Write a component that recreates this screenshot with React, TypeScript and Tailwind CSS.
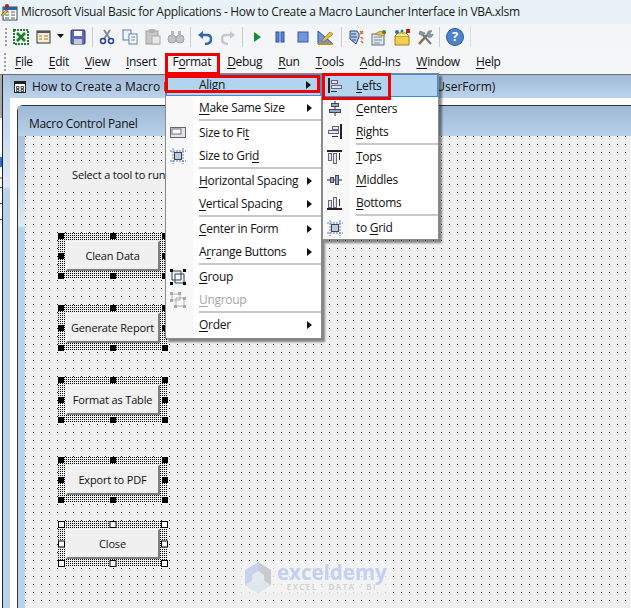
import React from 'react';

const uiFont = { fontFamily: '"Open Sans", "Noto Sans", sans-serif' };

// little helper for the underlined access keys
const Item = ({ pre = '', u, post = '' }: { pre?: string; u: string; post?: string }) => (
  <span>{pre}<u className="underline-offset-2">{u}</u>{post}</span>
);

const Arrow = () => (
  <svg width="5" height="8" viewBox="0 0 5 8" className="absolute top-1/2 right-[9px] -translate-y-1/2"><path d="M0 0l5 4-5 4z" fill="#111" /></svg>
);

const Sep = () => <div className="ml-[33px] h-[2px] bg-[#c8c8c8]" />;

const ToolSep = () => <div className="mx-[1px] h-[20px] w-[1px] bg-[#c4cdd4]" />;

const Grip = () => (
  <div className="mr-[3px] flex h-[18px] w-[3px] flex-col justify-between">
    {[0, 1, 2, 3, 4].map((i) => <div key={i} className="h-[2px] w-[2px] bg-[#a0a0a0]" />)}
  </div>
);

const Ico = ({ children, w = 20 }: { children: React.ReactNode; w?: number }) => (
  <svg width={w} height="18" viewBox={`0 0 ${w} 18`} className="shrink-0">{children}</svg>
);

const AppIcon = () => (
  <svg width="18" height="18" viewBox="0 0 18 18" className="shrink-0">
    <rect x="3" y="4" width="14" height="13" fill="#fff" stroke="#445" />
    <rect x="3" y="4" width="14" height="3" fill="#2b5fa8" />
    <path d="M5 9h4M11 9h4M5 12h4M11 12h4M5 15h4M11 15h4" stroke="#555" />
    <path d="M1 12l5-5 2 1-5 5z" fill="#e8c020" stroke="#333" strokeWidth=".5" />
    <circle cx="7" cy="3" r="2" fill="#b02020" />
  </svg>
);

const MiniForm = () => (
  <svg width="12" height="12" viewBox="0 0 12 12" className="shrink-0">
    <rect x=".5" y=".5" width="11" height="11" fill="#fff" stroke="#222" />
    <rect x="1" y="1" width="10" height="2" fill="#222" />
    <path d="M2.500 5.500h2.500v2H2.500zM7 5.500h2.500v2H7zM2.500 8.500h2.500v2H2.500zM7 8.500h2.500v2H7z" fill="none" stroke="#222" strokeWidth=".8" />
  </svg>
);

const MenuRow = ({ active, hasArrow, icon, disabled, short, iconCol = 'w-[23px] mr-[10px]', children }: { active?: boolean; hasArrow?: boolean; icon?: React.ReactNode; disabled?: boolean; short?: boolean; iconCol?: string; children: React.ReactNode }) => (
  <div className={`relative flex items-center text-[12px] ${short ? 'h-[22px]' : 'h-[23px]'} ${active ? 'border border-[#3a90d8] bg-[#b3d4ee]' : ''} ${disabled ? 'text-[#a6a6a6]' : 'text-[#111]'}`}>
    <div className={`flex shrink-0 items-center justify-center ${iconCol} ${active ? '-ml-[1px]' : ''}`}>{icon}</div>
    {children}
    {hasArrow && <Arrow />}
  </div>
);

const IconLefts = () => (
  <svg width="14" height="15" viewBox="0 0 14 15"><path d="M1 0v15" stroke="#222" strokeWidth="2" /><rect x="3.5" y="2.5" width="6" height="3" fill="#dfe8f2" stroke="#667" /><rect x="3.5" y="7.5" width="10" height="3" fill="#dfe8f2" stroke="#667" /><path d="M3 13.500h6" stroke="#333" /></svg>
);
const IconCenters = () => (
  <svg width="14" height="15" viewBox="0 0 14 15"><path d="M7 0v15" stroke="#222" /><rect x="3.5" y="2.5" width="7" height="3" fill="#8fa8c8" stroke="#445" /><rect x="1.5" y="8.5" width="11" height="3" fill="#8fa8c8" stroke="#445" /></svg>
);
const IconRights = () => (
  <svg width="14" height="15" viewBox="0 0 14 15"><path d="M13 0v15" stroke="#222" strokeWidth="2" /><rect x="4.5" y="2.5" width="6" height="3" fill="#dfe8f2" stroke="#667" /><rect x=".5" y="6.5" width="10" height="3" fill="#dfe8f2" stroke="#667" /><path d="M4 12.500h6" stroke="#333" /></svg>
);
const IconTops = () => (
  <svg width="15" height="14" viewBox="0 0 15 14"><path d="M0 1h15" stroke="#222" strokeWidth="2" /><rect x="1.5" y="3.5" width="3" height="7" fill="#dfe8f2" stroke="#667" /><rect x="6.5" y="3.5" width="3" height="10" fill="#dfe8f2" stroke="#667" /><path d="M12.500 3v7" stroke="#333" /></svg>
);
const IconMiddles = () => (
  <svg width="15" height="14" viewBox="0 0 15 14"><path d="M0 7h15" stroke="#222" /><rect x="3.5" y="4.5" width="3" height="5" fill="#8fa8c8" stroke="#445" /><rect x="8.5" y="2.5" width="3" height="9" fill="#8fa8c8" stroke="#445" /></svg>
);
const IconBottoms = () => (
  <svg width="15" height="14" viewBox="0 0 15 14"><path d="M0 13h15" stroke="#222" strokeWidth="2" /><rect x="1.5" y="4.5" width="3" height="7" fill="#dfe8f2" stroke="#667" /><rect x="6.5" y="1.5" width="3" height="10" fill="#dfe8f2" stroke="#667" /><path d="M12.500 3v7" stroke="#333" /></svg>
);
const IconGrid = () => (
  <svg width="16" height="16" viewBox="0 0 16 16"><path d="M3 0v16M13 0v16M0 3h16M0 13h16" stroke="#5b80c8" strokeDasharray="2 1" /><rect x="4.500" y="4.500" width="7" height="7" fill="#b8cbe0" stroke="#444" /></svg>
);
const IconFit = () => (
  <svg width="16" height="11" viewBox="0 0 16 11"><rect x=".5" y=".5" width="15" height="10" fill="#dfe3ea" stroke="#667" /><rect x="2" y="2" width="9" height="5" fill="#fff" stroke="#222" strokeWidth=".6" /></svg>
);
const IconGroup = () => (
  <svg width="16" height="16" viewBox="0 0 16 16"><path d="M2 2h9v9H2zM5 5h9v9H5z" fill="none" stroke="#2a4060" /><path d="M0 0h3v3H0zM13 0h3v3h-3zM0 13h3v3H0zM13 13h3v3h-3z" fill="#000" /></svg>
);
const IconUngroup = () => (
  <svg width="16" height="16" viewBox="0 0 16 16"><path d="M2 2h8v6H2zM6 6h8v8H6z" fill="none" stroke="#b0b0b0" /><path d="M0 0h3v3H0zM8 0h3v3H8zM0 7h3v3H0zM13 5h3v3h-3zM4 13h3v3H4zM13 13h3v3h-3z" fill="#a8a8a8" /></svg>
);

const handles = [
  'left-0 top-0', 'left-1/2 -translate-x-1/2 top-0', 'right-0 top-0',
  'left-0 top-1/2 -translate-y-1/2', 'right-0 top-1/2 -translate-y-1/2',
  'left-0 bottom-0', 'left-1/2 -translate-x-1/2 bottom-0', 'right-0 bottom-0',
];

const FormButton = ({ label, top, primary = true }: { label: string; top: string; primary?: boolean }) => (
  <div className={`absolute left-[33px] h-[46px] w-[110px] bg-[#f0f0f0] bg-[conic-gradient(from_270deg_at_1px_1px,#000_90deg,transparent_0)] bg-[size:2px_2px] p-[8px] ${top}`}>
    <div className="flex h-full w-full items-center justify-center border-t border-r-2 border-b-2 border-l border-t-[#fafafa] border-r-[#7f7f7f] border-b-[#7f7f7f] border-l-[#fafafa] bg-[#f0f0f0] pt-[2px] text-[11px] tracking-[-0.15px] whitespace-nowrap text-[#111]">{label}</div>
    {handles.map((h) => (
      <div key={h} className={`absolute ${primary ? 'h-[6px] w-[6px] bg-black' : 'h-[7px] w-[7px] border border-black bg-white'} ${h}`} />
    ))}
  </div>
);

export default function App() {
  return (
    <div className="relative flex h-[608px] w-[631px] flex-col overflow-hidden bg-[#f0f0f0] tracking-[-0.3px]" style={uiFont}>
      {/* title bar */}
      <div className="flex h-[24px] shrink-0 items-center gap-[3px] bg-[#e9f3f7] text-[12px] text-[#1a1a1a]">
        <AppIcon />
        <span className="whitespace-nowrap">Microsoft Visual Basic for Applications - How to Create a Macro Launcher Interface in VBA.xlsm</span>
      </div>

      {/* standard toolbar */}
      <div className="flex h-[25px] shrink-0 items-center bg-[#f3f5f6] pl-[5px]">
        <Grip />
        <div className="flex items-center gap-[3px]">
          <Ico><rect x="3" y="2" width="14" height="14" fill="#fff" stroke="#1f7a2e" strokeWidth="2" strokeDasharray="2 1" /><rect x="5" y="4" width="10" height="10" fill="#dcefdc" /><path d="M6 5l8 8M14 5l-8 8" stroke="#1f7a2e" strokeWidth="2.500" /></Ico>
          <Ico><rect x="3" y="3" width="13" height="12" fill="#f5efd8" stroke="#333" /><rect x="3" y="3" width="13" height="2" fill="#555" /><path d="M5 8h3M5 11h3M10 8h4M10 11h4" stroke="#c07020" /></Ico>
          <svg width="8" height="5" viewBox="0 0 8 5"><path d="M0 0h7L3.500 4z" fill="#111" /></svg>
          <Ico><rect x="3" y="2" width="14" height="14" rx="1" fill="#5a68b8" stroke="#2c3c80" /><rect x="6" y="3" width="8" height="5" fill="#fff" /><rect x="6" y="11" width="8" height="5" fill="#c8c8d8" /></Ico>
          <ToolSep />
          <Ico><path d="M7 2l6 9M13 2l-6 9" stroke="#7a8a9a" strokeWidth="2" /><circle cx="6" cy="13" r="2.500" fill="none" stroke="#2a3f9a" strokeWidth="1.500" /><circle cx="14" cy="13" r="2.500" fill="none" stroke="#2a3f9a" strokeWidth="1.500" /></Ico>
          <Ico><rect x="3" y="2" width="8" height="10" fill="#eaf1f8" stroke="#5a80b0" /><rect x="9" y="6" width="8" height="10" fill="#fff" stroke="#5a80b0" /><path d="M11 9h4M11 12h4" stroke="#5a80b0" /></Ico>
          <Ico><rect x="3" y="3" width="12" height="13" fill="#c8c8c8" stroke="#a0a0a0" /><rect x="6" y="1" width="6" height="4" fill="#b0b0b0" /><rect x="9" y="8" width="8" height="8" fill="#e8e8e8" stroke="#aaa" /></Ico>
          <Ico><circle cx="6" cy="11" r="4" fill="#c4c4c4" stroke="#a4a4a4" /><circle cx="14" cy="11" r="4" fill="#c4c4c4" stroke="#a4a4a4" /><rect x="5" y="3" width="3" height="6" fill="#b8b8b8" /><rect x="12" y="3" width="3" height="6" fill="#b8b8b8" /></Ico>
          <ToolSep />
          <Ico><path d="M5 7h7c3 0 4 2 4 4 0 3-2 5-6 5" fill="none" stroke="#3168b0" strokeWidth="2.500" /><path d="M3 7l5-4v8z" fill="#3168b0" /></Ico>
          <Ico><path d="M15 7H8c-3 0-4 2-4 4 0 3 2 5 6 5" fill="none" stroke="#c8c8c8" strokeWidth="2.500" /><path d="M17 7l-5-4v8z" fill="#c8c8c8" /></Ico>
          <ToolSep />
          <Ico><path d="M7 4l7 5-7 5z" fill="#1a8a3a" /></Ico>
          <Ico><rect x="6" y="4" width="3" height="10" fill="#5b88d8" stroke="#2a50a0" /><rect x="11" y="4" width="3" height="10" fill="#5b88d8" stroke="#2a50a0" /></Ico>
          <Ico><rect x="5" y="4" width="10" height="10" fill="#6f96d8" stroke="#3a5aa0" /></Ico>
          <Ico w={21}><path d="M2 3v13h15z" fill="#6f96d8" stroke="#26509c" /><path d="M5 13l3-3 6-6 3 2-8 7z" fill="#e8c040" stroke="#806010" strokeWidth=".6" /><path d="M2 16h15" stroke="#c09020" strokeWidth="2" /></Ico>
          <ToolSep />
          <Ico><path d="M4 3h7l2 3v3l-3 7-6-5z" fill="#b8cbe8" stroke="#2a4a90" /><path d="M5 6h5M5 9h6M6 12h4" stroke="#2a4a90" /><path d="M14 3l3 3M17 3l-3 3M15 9l2 2M15 13l2 2" stroke="#d87020" strokeWidth="1.500" /></Ico>
          <Ico><rect x="3" y="6" width="12" height="11" fill="#dde6f0" stroke="#607080" /><path d="M5 9h8M5 12h8M5 15h6" stroke="#7a8a9a" /><path d="M6 6l5-3 6 2-3 3z" fill="#e0c050" stroke="#907020" strokeWidth=".6" /><circle cx="15" cy="4" r="2" fill="#2a9040" /></Ico>
          <Ico><path d="M3 8h14v9H3z" fill="#f0d050" stroke="#a08010" /><path d="M3 8l3-3h8l3 3" fill="#f8e890" stroke="#a08010" /><rect x="14" y="1" width="4" height="4" fill="#c02020" /><circle cx="5" cy="4" r="2" fill="#2a70c0" /><circle cx="10" cy="3" r="1.500" fill="#2a9040" /></Ico>
          <Ico><path d="M4 16l8-9" stroke="#8a6a40" strokeWidth="2.500" /><path d="M16 16L8 7" stroke="#707880" strokeWidth="2" /><path d="M5 3l5 2-2 3-4-2zM12 6c0-3 3-4 5-3l-2 2 1 2 2-1c0 3-3 4-5 3z" fill="#909aa4" stroke="#505860" strokeWidth=".5" /></Ico>
          <ToolSep />
          <div className="ml-[2px] flex h-[18px] w-[18px] items-center justify-center rounded-full border border-[#2c5c9c] bg-[#4d84c8] text-[13px] leading-none font-bold text-white">?</div>
          <div className="ml-[3px] h-[20px] w-[1px] bg-[#d8dde0]" />
        </div>
      </div>

      {/* menu bar */}
      <div className="flex h-[25px] shrink-0 items-center bg-[#f5f6f7] pl-[4px] text-[12px] text-[#111]">
        <div className="-mr-[3px]"><Grip /></div>
        <span className="px-[8px]"><u className="underline-offset-2">F</u>ile</span>
        <span className="px-[8px]"><u className="underline-offset-2">E</u>dit</span>
        <span className="px-[8px]"><u className="underline-offset-2">V</u>iew</span>
        <span className="px-[8px]"><u className="underline-offset-2">I</u>nsert</span>
        <span className="px-[8px]">F<u className="underline-offset-2">o</u>rmat</span>
        <span className="px-[8px]"><u className="underline-offset-2">D</u>ebug</span>
        <span className="px-[8px]"><u className="underline-offset-2">R</u>un</span>
        <span className="px-[8px]"><u className="underline-offset-2">T</u>ools</span>
        <span className="px-[8px]"><u className="underline-offset-2">A</u>dd-Ins</span>
        <span className="px-[8px]"><u className="underline-offset-2">W</u>indow</span>
        <span className="px-[8px]"><u className="underline-offset-2">H</u>elp</span>
      </div>

      {/* mdi area */}
      <div className="flex min-h-0 flex-1 border-t border-[#6e6e6e]">
        {/* cut-off project pane on the far left */}
        <div className="flex w-[2px] shrink-0 flex-col bg-white">
          <div className="h-[43px] bg-[#a8a8a8]" />
          <div className="mt-[39px] h-[10px] bg-[#2f6fd0]" />
          <div className="mt-[10px] h-[2px] bg-[#a8a8a8]" />
          <div className="mt-[8px] h-[1px] bg-[#444]" />
          <div className="mt-[15px] h-[1px] bg-[#444]" />
          <div className="mt-[15px] h-[1px] bg-[#444]" />
        </div>
        <div className="w-[1px] shrink-0 bg-[#222]" />
        <div className="w-[7px] shrink-0 bg-[linear-gradient(#a9c1da_0,#bcd4ec_24px,#dde9f5_112px,#bad2ec_114px)]" />
        <div className="flex min-w-0 flex-1 flex-col">
          <div className="flex h-[23px] shrink-0 items-center gap-[6px] bg-gradient-to-b from-[#a0bbd8] to-[#bcd4ec] pl-[4px] text-[12px] tracking-normal text-[#111]">
            <MiniForm />
            <span className="whitespace-nowrap">How to Create a Macro Launcher Interface in VBA.xlsm - UserForm1 <span className="ml-[20px]">(UserForm)</span></span>
          </div>
          <div className="flex min-h-0 flex-1 flex-col bg-white pt-[7px] pl-[7px]">
            <div className="flex min-h-0 flex-1 flex-col rounded-tl-[6px] border-t border-l border-[#333] bg-[linear-gradient(#a9c1da_30px,#dde9f5_120px,#bad2ec_122px)]">
              <div className="flex h-[30px] shrink-0 items-center bg-gradient-to-b from-[#9db8d4] to-[#b9d1ea] pt-[6px] pl-[11px] text-[12px] text-[#111]">Macro Control Panel</div>
              <div className="min-h-0 flex-1 pl-[7px]">
                <div className="relative h-full bg-[#f0f0f0] bg-[conic-gradient(from_270deg_at_1px_1px,#000_90deg,transparent_0)] bg-[size:8px_8px]">
                  <div className="absolute top-[29px] left-[40px] bg-[#f0f0f0] px-[7px] py-[2px] text-[11px] tracking-[-0.15px] text-[#111]">Select a tool to run</div>
                  <FormButton label="Clean Data" top="top-[97px]" />
                  <FormButton label="Generate Report" top="top-[169px]" />
                  <FormButton label="Format as Table" top="top-[241px]" />
                  <FormButton label="Export to PDF" top="top-[321px]" />
                  <FormButton label="Close" top="top-[385px]" primary={false} />

                  {/* watermark */}
                  <div className="absolute top-[425px] left-[216px] flex h-[32px] w-[150px] items-center gap-[5px] bg-[#f4f4f4]/80 pl-[3px] tracking-normal">
                    <svg width="28" height="31" viewBox="0 0 28 31" className="shrink-0">
                      <path d="M14 0l13 8v15l-13 8-13-8V8z" fill="#c6d2ee" />
                      <path d="M14 0l13 8v15l-13-8z" fill="#c8ccd0" />
                      <path d="M14 15l13 8-13 8-13-8z" fill="#dde6ea" />
                      <path d="M14 9l6 4v6l-6 4-6-4v-6z" fill="#e4e8ee" />
                    </svg>
                    <div className="flex flex-col items-center leading-none">
                      <span className="text-[20.5px] leading-[20px] font-bold text-[#c4d0f2]">exceldemy</span>
                      <span className="text-[8px] leading-[10px] font-semibold tracking-[1.500px] text-[#cfcfcf]">EXCEL · DATA · BI</span>
                    </div>
                  </div>
                </div>
              </div>
            </div>
          </div>
        </div>
      </div>

      {/* Format menu */}
      <div className="absolute top-[73px] left-[165px] w-[157px] border border-[#8a8a8a] bg-[linear-gradient(to_right,#f8f8f8_27px,#fff_27px)] pb-[2px] shadow-[3px_3px_2px_rgba(0,0,0,0.45)]">
        <MenuRow active short hasArrow><Item u="A" post="lign" /></MenuRow>
        <MenuRow hasArrow><Item u="M" post="ake Same Size" /></MenuRow>
        <Sep />
        <MenuRow icon={<IconFit />}><Item pre="Size to Fi" u="t" /></MenuRow>
        <MenuRow icon={<IconGrid />}><Item pre="Size to Gri" u="d" /></MenuRow>
        <Sep />
        <MenuRow hasArrow><Item u="H" post="orizontal Spacing" /></MenuRow>
        <MenuRow hasArrow><Item u="V" post="ertical Spacing" /></MenuRow>
        <Sep />
        <MenuRow hasArrow><Item u="C" post="enter in Form" /></MenuRow>
        <MenuRow hasArrow><Item pre="A" u="r" post="range Buttons" /></MenuRow>
        <Sep />
        <MenuRow icon={<IconGroup />}><Item u="G" post="roup" /></MenuRow>
        <MenuRow icon={<IconUngroup />} disabled><Item u="U" post="ngroup" /></MenuRow>
        <Sep />
        <MenuRow hasArrow><Item u="O" post="rder" /></MenuRow>
      </div>

      {/* Align submenu */}
      <div className="absolute top-[73px] left-[322px] w-[117px] border border-[#8a8a8a] bg-[linear-gradient(to_right,#f8f8f8_27px,#fff_27px)] shadow-[3px_3px_2px_rgba(0,0,0,0.45)]">
        <MenuRow active icon={<IconLefts />}><Item u="L" post="efts" /></MenuRow>
        <MenuRow icon={<IconCenters />}><Item u="C" post="enters" /></MenuRow>
        <MenuRow icon={<IconRights />}><Item u="R" post="ights" /></MenuRow>
        <Sep />
        <MenuRow icon={<IconTops />}><Item u="T" post="ops" /></MenuRow>
        <MenuRow icon={<IconMiddles />}><Item u="M" post="iddles" /></MenuRow>
        <MenuRow icon={<IconBottoms />}><Item u="B" post="ottoms" /></MenuRow>
        <Sep />
        <MenuRow icon={<IconGrid />}><Item pre="to " u="G" post="rid" /></MenuRow>
      </div>

      {/* red annotation boxes */}
      <div className="absolute top-[53px] left-[165px] h-[22px] w-[55px] border-[3px] border-[#f00000]" />
      <div className="absolute top-[75px] left-[165px] h-[18px] w-[155px] border-[3px] border-[#f00000]" />
      <div className="absolute top-[73px] left-[322px] h-[27px] w-[69px] border-[3px] border-[#f00000]" />
    </div>
  );
}
